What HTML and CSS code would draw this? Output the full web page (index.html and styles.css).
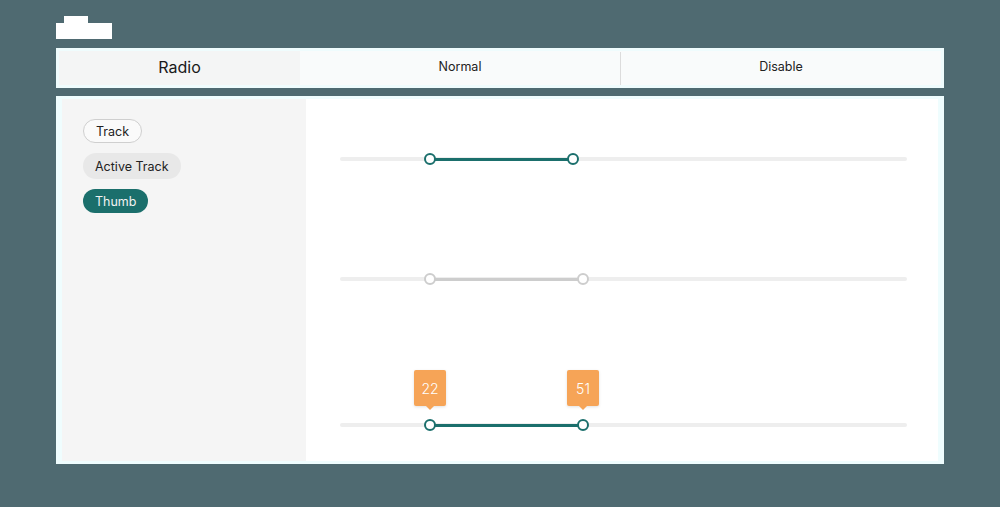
FILE: index.html
```html
<!DOCTYPE html>
<html>
<head>
<meta charset="utf-8">
<link rel="stylesheet" href="styles.css">
</head>
<body>
<div class="page">
  <div class="tab"><div class="tab-bump"></div><div class="tab-body"></div></div>
  <div class="header">
    <div class="cell cell-title">Radio</div>
    <div class="cell">Normal</div>
    <div class="divider"></div>
    <div class="cell">Disable</div>
  </div>
  <div class="panel">
    <div class="sidebar">
      <span class="chip chip-outline">Track</span>
      <span class="chip chip-grey">Active Track</span>
      <span class="chip chip-teal">Thumb</span>
    </div>
    <div class="content">
      <div class="slider slider-1">
        <div class="track"></div>
        <div class="active" style="left:90px;width:143px"></div>
        <div class="thumb" style="left:90px"></div>
        <div class="thumb" style="left:233px"></div>
      </div>
      <div class="slider slider-2 disabled">
        <div class="track"></div>
        <div class="active" style="left:90px;width:153px"></div>
        <div class="thumb" style="left:90px"></div>
        <div class="thumb" style="left:243px"></div>
      </div>
      <div class="slider slider-3">
        <div class="track"></div>
        <div class="active" style="left:90px;width:153px"></div>
        <div class="thumb" style="left:90px"></div>
        <div class="thumb" style="left:243px"></div>
        <div class="tip" style="left:90px">22</div>
        <div class="tip" style="left:243px">51</div>
      </div>
    </div>
  </div>
</div>
</body>
</html>
```
FILE: styles.css
```css
* { box-sizing: border-box; }
html, body { margin: 0; padding: 0; }
body {
  background: #4f6a71;
  font-family: Inter, "Noto Sans", sans-serif;
  width: 1000px;
  height: 507px;
  overflow: hidden;
}
.page {
  padding: 16px 56px 0 56px;
}
.tab { height: 23px; display: flex; flex-direction: column; }
.tab-bump { width: 24px; height: 7px; margin-left: 8px; background: #ffffff; }
.tab-body { width: 56px; height: 16px; background: #ffffff; }
.header {
  margin-top: 9px;
  height: 40px;
  background: #f9fbfb;
  border: 3px solid #effcfd;
  display: flex;
  align-items: center;
}
.cell {
  flex: 1;
  height: 100%;
  display: flex;
  align-items: center;
  justify-content: center;
  padding-bottom: 4px;
  font-size: 12.5px;
  color: #222;
}
.cell-title {
  flex: 0 0 241px;
  background: #f4f5f5;
  font-size: 16px;
  padding-bottom: 3px;
  color: #1a1a1a;
}
.divider { width: 1px; height: 33px; background: #dcdcdc; }
.panel {
  margin-top: 8px;
  height: 368px;
  display: flex;
  border-style: solid;
  border-color: #effdfe;
  border-width: 3px 6px 3px 6px;
  background: #ffffff;
}
.sidebar {
  width: 244px;
  background: #f5f5f5;
  padding: 20px 0 0 21px;
  display: flex;
  flex-direction: column;
  align-items: flex-start;
  gap: 10px;
}
.chip {
  height: 24px;
  padding: 0 12px;
  border-radius: 12px;
  font-size: 12.5px;
  display: inline-flex;
  align-items: center;
  color: #222;
}
.chip-outline { border: 1px solid #cfcfcf; background: #fafafa; }
.chip-grey { background: #e8e8e8; height: 26px; border-radius: 13px; }
.chip-teal { background: #1b6f6c; color: #f2f2f2; }
.content {
  flex: 1;
  padding: 58px 31px 0 34px;
  display: flex;
  flex-direction: column;
}
.slider { position: relative; height: 4px; }
.slider-2 { margin-top: 116px; }
.slider-3 { margin-top: 142px; }
.track { height: 4px; border-radius: 2px; background: #eeeeee; }
.active { position: absolute; top: 0.5px; height: 3px; background: #1b6f6c; }
.thumb {
  position: absolute;
  top: -4px;
  width: 12px;
  height: 12px;
  margin-left: -6px;
  border-radius: 50%;
  background: #fff;
  border: 2px solid #1b6f6c;
}
.disabled .active { background: #cdcdcd; }
.disabled .thumb { border-color: #cdcdcd; }
.tip {
  position: absolute;
  top: -53px;
  width: 32px;
  height: 36px;
  margin-left: -16px;
  background: #f6a457;
  color: #fff;
  border-radius: 2px;
  font-size: 14px;
  font-weight: 300;
  display: flex;
  align-items: center;
  justify-content: center;
  box-shadow: 0 1px 3px rgba(0,0,0,0.12);
}
.tip::after {
  content: "";
  position: absolute;
  bottom: -4px;
  left: 12px;
  border-left: 4px solid transparent;
  border-right: 4px solid transparent;
  border-top: 4px solid #f6a457;
}
```
